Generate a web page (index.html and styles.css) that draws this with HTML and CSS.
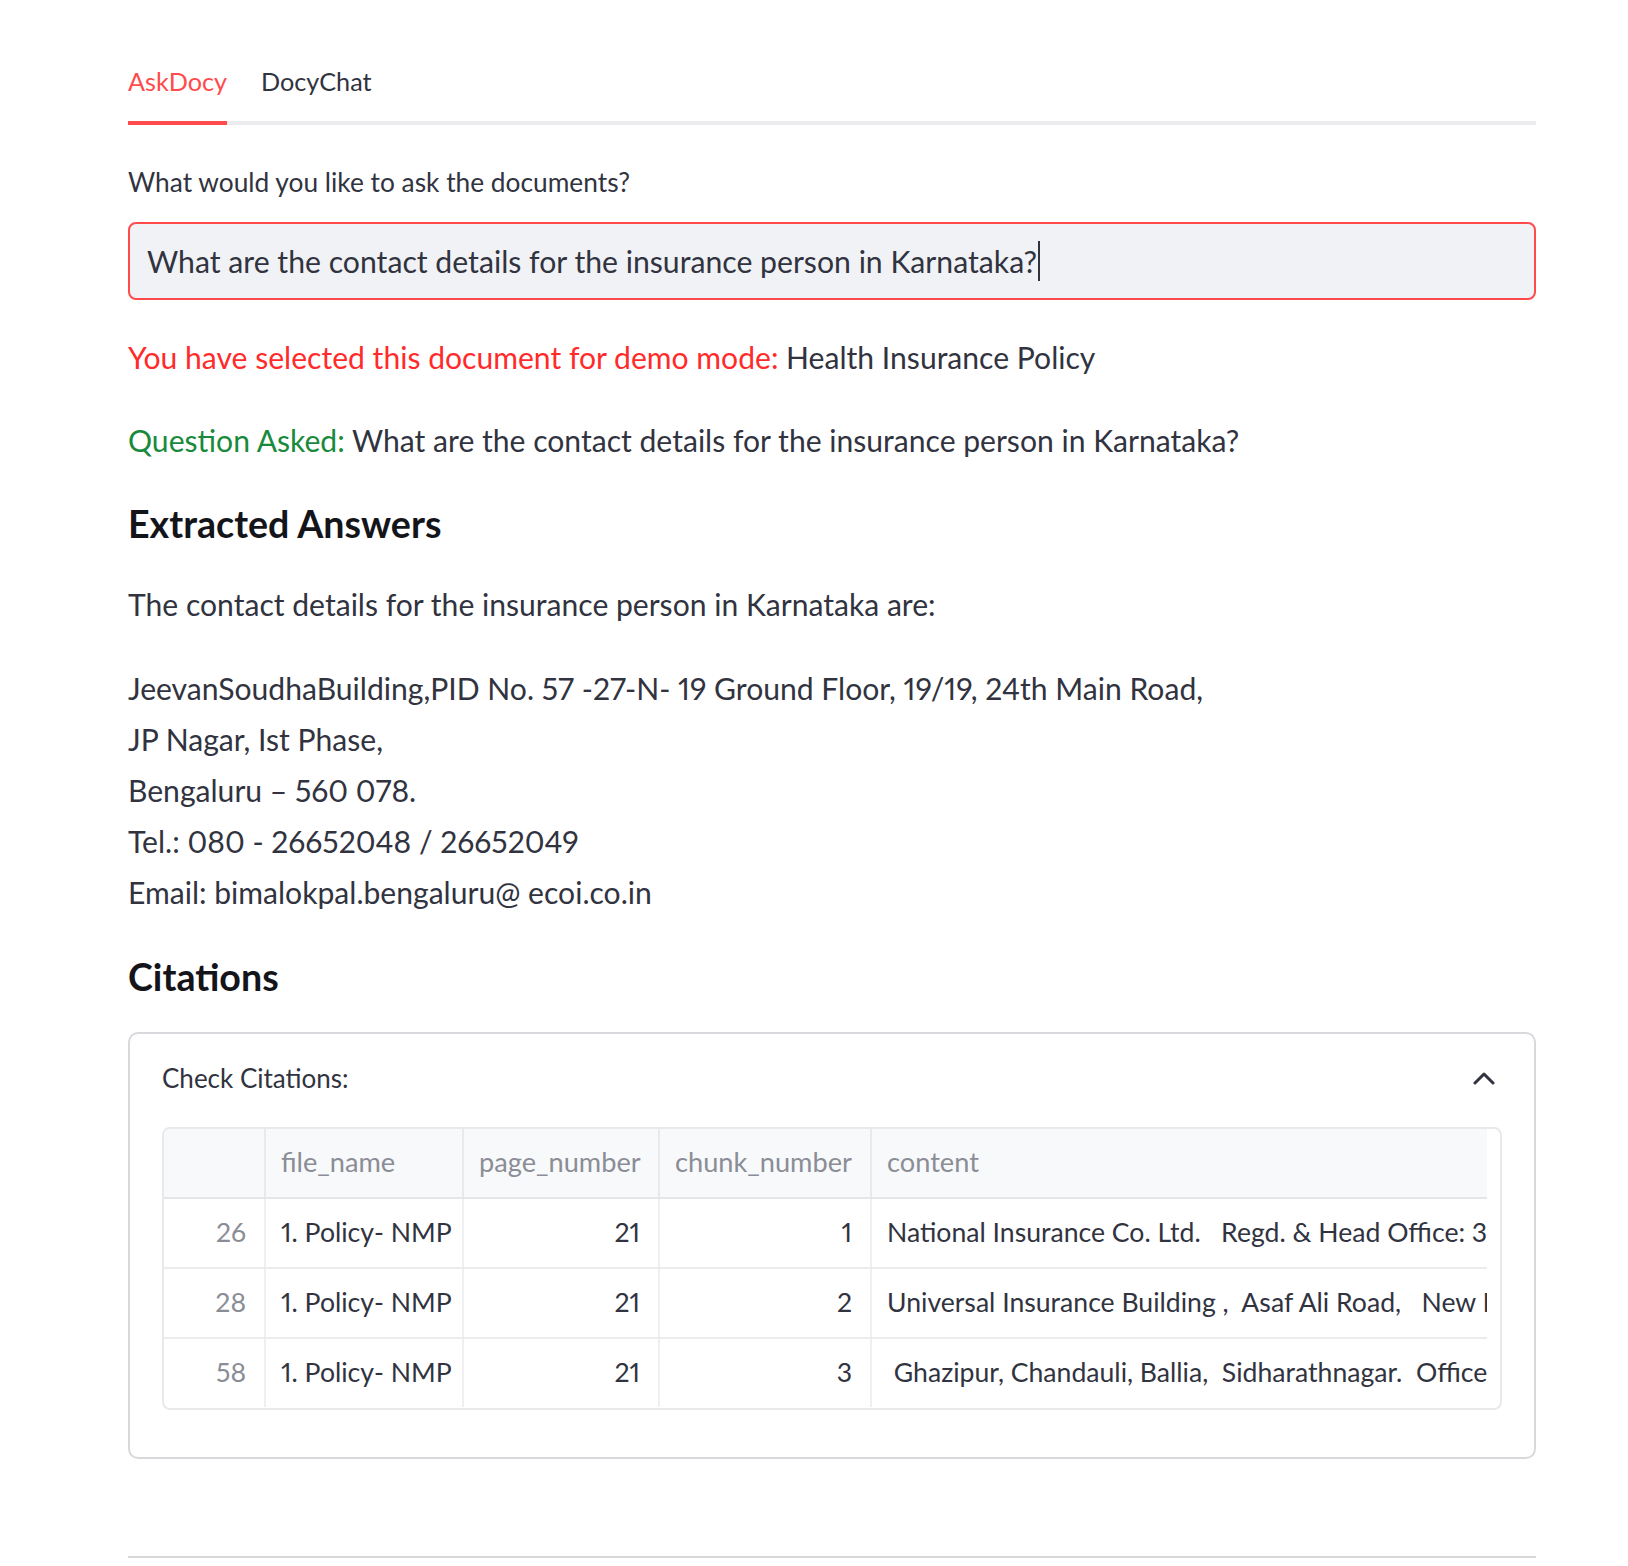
FILE: index.html
```html
<!DOCTYPE html>
<html lang="en">
<head>
<meta charset="utf-8">
<title>AskDocy</title>
<link rel="stylesheet" href="styles.css">
</head>
<body>
<main class="page">
  <div class="tab-list">
    <div class="tab tab-active">AskDocy</div>
    <div class="tab">DocyChat</div>
  </div>

  <section class="panel">
    <div class="field">
      <label class="field-label">What would you like to ask the documents?</label>
      <div class="text-input">What are the contact details for the insurance person in Karnataka?<span class="caret"></span></div>
    </div>

    <p class="line"><span class="red">You have selected this document for demo mode:</span> Health Insurance Policy</p>
    <p class="line"><span class="green">Question Asked:</span> What are the contact details for the insurance person in Karnataka?</p>

    <h3 class="heading">Extracted Answers</h3>
    <p class="line">The contact details for the insurance person in Karnataka are:</p>
    <p class="line">JeevanSoudhaBuilding,PID No. 57 -27-N- 19 Ground Floor, 19/19, 24th Main Road,<br>JP Nagar, Ist Phase,<br>Bengaluru – 560 078.<br>Tel.: 080 - 26652048 / 26652049<br>Email: bimalokpal.bengaluru@ ecoi.co.in</p>

    <h3 class="heading">Citations</h3>

    <div class="expander">
      <div class="expander-head">
        <span>Check Citations:</span>
        <svg class="chevron" width="22" height="14" viewBox="0 0 22 14"><polyline points="2,12 11,3 20,12" fill="none" stroke="#31333f" stroke-width="3" stroke-linecap="round" stroke-linejoin="round"/></svg>
      </div>
      <div class="expander-body">
        <div class="table">
          <div class="grid">
            <div class="row head">
              <div class="cell idx"></div>
              <div class="cell c-file">file_name</div>
              <div class="cell c-page">page_number</div>
              <div class="cell c-chunk">chunk_number</div>
              <div class="cell c-content">content</div>
            </div>
            <div class="row">
              <div class="cell idx num">26</div>
              <div class="cell c-file">1. Policy- NMP</div>
              <div class="cell c-page num">21</div>
              <div class="cell c-chunk num">1</div>
              <div class="cell c-content">National Insurance Co. Ltd.   Regd. &amp; Head Office: 3, Middleton Street, Kolkata - 700071</div>
            </div>
            <div class="row">
              <div class="cell idx num">28</div>
              <div class="cell c-file">1. Policy- NMP</div>
              <div class="cell c-page num">21</div>
              <div class="cell c-chunk num">2</div>
              <div class="cell c-content">Universal Insurance Building ,  Asaf Ali Road,   New Delhi - 110002</div>
            </div>
            <div class="row last">
              <div class="cell idx num">58</div>
              <div class="cell c-file">1. Policy- NMP</div>
              <div class="cell c-page num">21</div>
              <div class="cell c-chunk num">3</div>
              <div class="cell c-content"> Ghazipur, Chandauli, Ballia,  Sidharathnagar.  Office of the Insurance Ombudsman</div>
            </div>
          </div>
        </div>
      </div>
    </div>

    <hr class="rule">
  </section>
</main>
</body>
</html>
```
FILE: styles.css
```css
* { box-sizing: border-box; }

html, body {
  margin: 0;
  padding: 0;
  background: #ffffff;
}

body {
  font-family: "Lato", "Liberation Sans", sans-serif;
  font-variant-numeric: proportional-nums;
  color: #31333f;
  width: 1628px;
}

.page {
  width: 1536px;
  padding: 42px 0 0 128px;
}

/* Tabs */
.tab-list {
  display: flex;
  gap: 34px;
  border-bottom: 4px solid #ececee;
  width: 1408px;
}

.tab {
  height: 83px;
  margin-bottom: -4px;
  border-bottom: 4px solid transparent;
  display: flex;
  align-items: center;
  padding-bottom: 2px;
  font-size: 25.2px;
  color: #31333f;
}

.tab-active {
  color: #ff4b4b;
  border-bottom-color: #ff4b4b;
}

/* Panel */
.panel {
  width: 1408px;
  padding-top: 37px;
  display: flex;
  flex-direction: column;
  gap: 32px;
}

.field {
  display: flex;
  flex-direction: column;
}

.field-label {
  font-size: 26.3px;
  line-height: 40px;
  height: 40px;
  margin-bottom: 20px;
  color: #31333f;
}

.text-input {
  height: 78px;
  border: 2px solid #ff4b4b;
  border-radius: 8px;
  background: #f0f2f6;
  padding: 0 17px;
  display: flex;
  align-items: center;
  font-size: 30.2px;
  color: #31333f;
  white-space: pre;
}

.caret {
  display: inline-block;
  width: 2px;
  height: 40px;
  background: #31333f;
  margin-left: 1px;
}

.line {
  margin: 0;
  font-size: 30.1px;
  line-height: 51.2px;
  color: #31333f;
}

.red { color: #ff2b2b; }
.green { color: #198a3c; }

.heading {
  margin: 3px 0 0;
  font-size: 37.6px;
  line-height: 46px;
  font-weight: 700;
  color: #14151a;
}

/* Expander */
.expander {
  border: 2px solid #d9d9dd;
  border-radius: 10px;
  width: 1408px;
}

.expander-head {
  height: 93px;
  display: flex;
  align-items: center;
  justify-content: space-between;
  padding: 0 39px 4px 32px;
  font-size: 26px;
  color: #31333f;
}

.chevron {
  display: block;
}

.expander-body {
  padding: 0 32px 47px 32px;
}

.table {
  border: 2px solid #e9e9ec;
  border-radius: 8px;
  overflow: hidden;
  height: 283px;
  padding-right: 13px;
}

.grid {
  width: 1323px;
  display: flex;
  flex-direction: column;
}

.row {
  display: flex;
  height: 70px;
  border-bottom: 2px solid #ececef;
}

.row.last {
  border-bottom: none;
  height: 68px;
}

.row.head {
  background: #f8f9fb;
  color: #8b8d96;
  border-bottom-color: #e6e6ea;
}

.row.head .cell { font-size: 27.2px; }

.cell {
  display: flex;
  align-items: center;
  font-size: 26.6px;
  white-space: pre;
  overflow: hidden;
  border-right: 2px solid #efeff2;
  padding: 0 17px 2px 15px;
  flex-shrink: 0;
}

.row.head .cell { border-right-color: #e9e9ec; }

.idx { width: 102px; color: #8b8d96; }
.c-file { width: 198px; }
.c-page { width: 196px; }
.c-chunk { width: 212px; }
.c-content { width: 615px; border-right: none; padding-left: 15px; }

.num {
  justify-content: flex-end;
  padding-right: 18px;
}

.rule {
  margin: 65px 0 0;
  border: none;
  height: 2px;
  background: #d9d9dc;
  width: 1408px;
}
```
